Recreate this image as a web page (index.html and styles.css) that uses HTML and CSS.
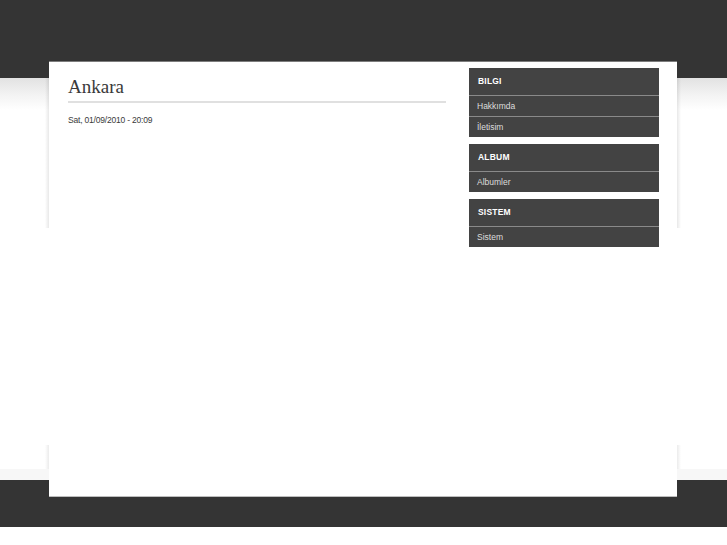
FILE: index.html
```html
<!DOCTYPE html>
<html lang="tr">
<head>
<meta charset="utf-8">
<title>Ankara</title>
<link rel="stylesheet" href="styles.css">
</head>
<body>
<div class="page">
  <div class="frame">
    <div class="box">
      <main class="content">
        <h1 class="title">Ankara</h1>
        <div class="meta">Sat, 01/09/2010 - 20:09</div>
      </main>
      <aside class="sidebar">
        <section class="block">
          <h2 class="block-title">BILGI</h2>
          <ul class="menu">
            <li><a href="#">Hakkımda</a></li>
            <li><a href="#">İletisim</a></li>
          </ul>
        </section>
        <section class="block">
          <h2 class="block-title">ALBUM</h2>
          <ul class="menu">
            <li><a href="#">Albumler</a></li>
          </ul>
        </section>
        <section class="block">
          <h2 class="block-title">SISTEM</h2>
          <ul class="menu">
            <li><a href="#">Sistem</a></li>
          </ul>
        </section>
      </aside>
    </div>
  </div>
</div>
</body>
</html>
```
FILE: styles.css
```css
html, body {
  margin: 0;
  padding: 0;
}
body {
  background: #fff;
  overflow: hidden;
}
.page {
  height: 545px;
  box-sizing: border-box;
  padding-top: 61px;
  background:
    linear-gradient(#f7f7f7 0 11px, #343434 11px 58px, #fff 58px) left bottom / 100% 76px no-repeat,
    linear-gradient(#343434 0 78px, #e2e2e2 78px, #f3f3f3 95px, #fff 110px) left top / 100% 110px no-repeat,
    #fff;
}
.frame {
  width: 636px;
  margin-left: calc(50% - 318.5px);
  padding: 0 4px;
  box-sizing: border-box;
  background:
    linear-gradient(to left, rgba(0,0,0,.09), rgba(0,0,0,0)) 0 17px / 4px 150px no-repeat,
    linear-gradient(to right, rgba(0,0,0,.09), rgba(0,0,0,0)) 100% 17px / 4px 150px no-repeat,
    linear-gradient(to left, rgba(0,0,0,.08), rgba(0,0,0,0)) 0 384px / 4px 24px no-repeat,
    linear-gradient(to right, rgba(0,0,0,.08), rgba(0,0,0,0)) 100% 384px / 4px 24px no-repeat;
}
.box {
  height: 436px;
  box-sizing: border-box;
  background: #fff;
  border-top: 1px solid #7d7d7d;
  border-bottom: 1px solid #bdbdbd;
  display: flex;
  gap: 23px;
  padding: 6px 18px 0 19px;
}
.content {
  width: 378px;
}
.title {
  margin: 8px 0 0;
  padding-bottom: 3px;
  border-bottom: 2px solid #e0e0e0;
  font: normal 19px/22px "Liberation Sans", serif;
  font-family: "Liberation Serif", serif;
  color: #3a3a3a;
}
.meta {
  margin-top: 11px;
  font: 8.5px/12px "Liberation Sans", sans-serif;
  letter-spacing: -0.2px;
  color: #3a3a3a;
}
.sidebar {
  width: 190px;
  display: flex;
  flex-direction: column;
  gap: 7px;
}
.block {
  background: #434343;
}
.block-title {
  margin: 0;
  height: 27px;
  padding-left: 9px;
  font: bold 8.5px/27px "Liberation Sans", sans-serif;
  letter-spacing: 0.2px;
  color: #fff;
}
.menu {
  list-style: none;
  margin: 0;
  padding: 0;
}
.menu li {
  border-top: 1px solid #8a8a8a;
  height: 20px;
  padding-left: 8px;
  font: 8.5px/20px "Liberation Sans", sans-serif;
}
.menu a {
  color: #dddddd;
  text-decoration: none;
}
```
